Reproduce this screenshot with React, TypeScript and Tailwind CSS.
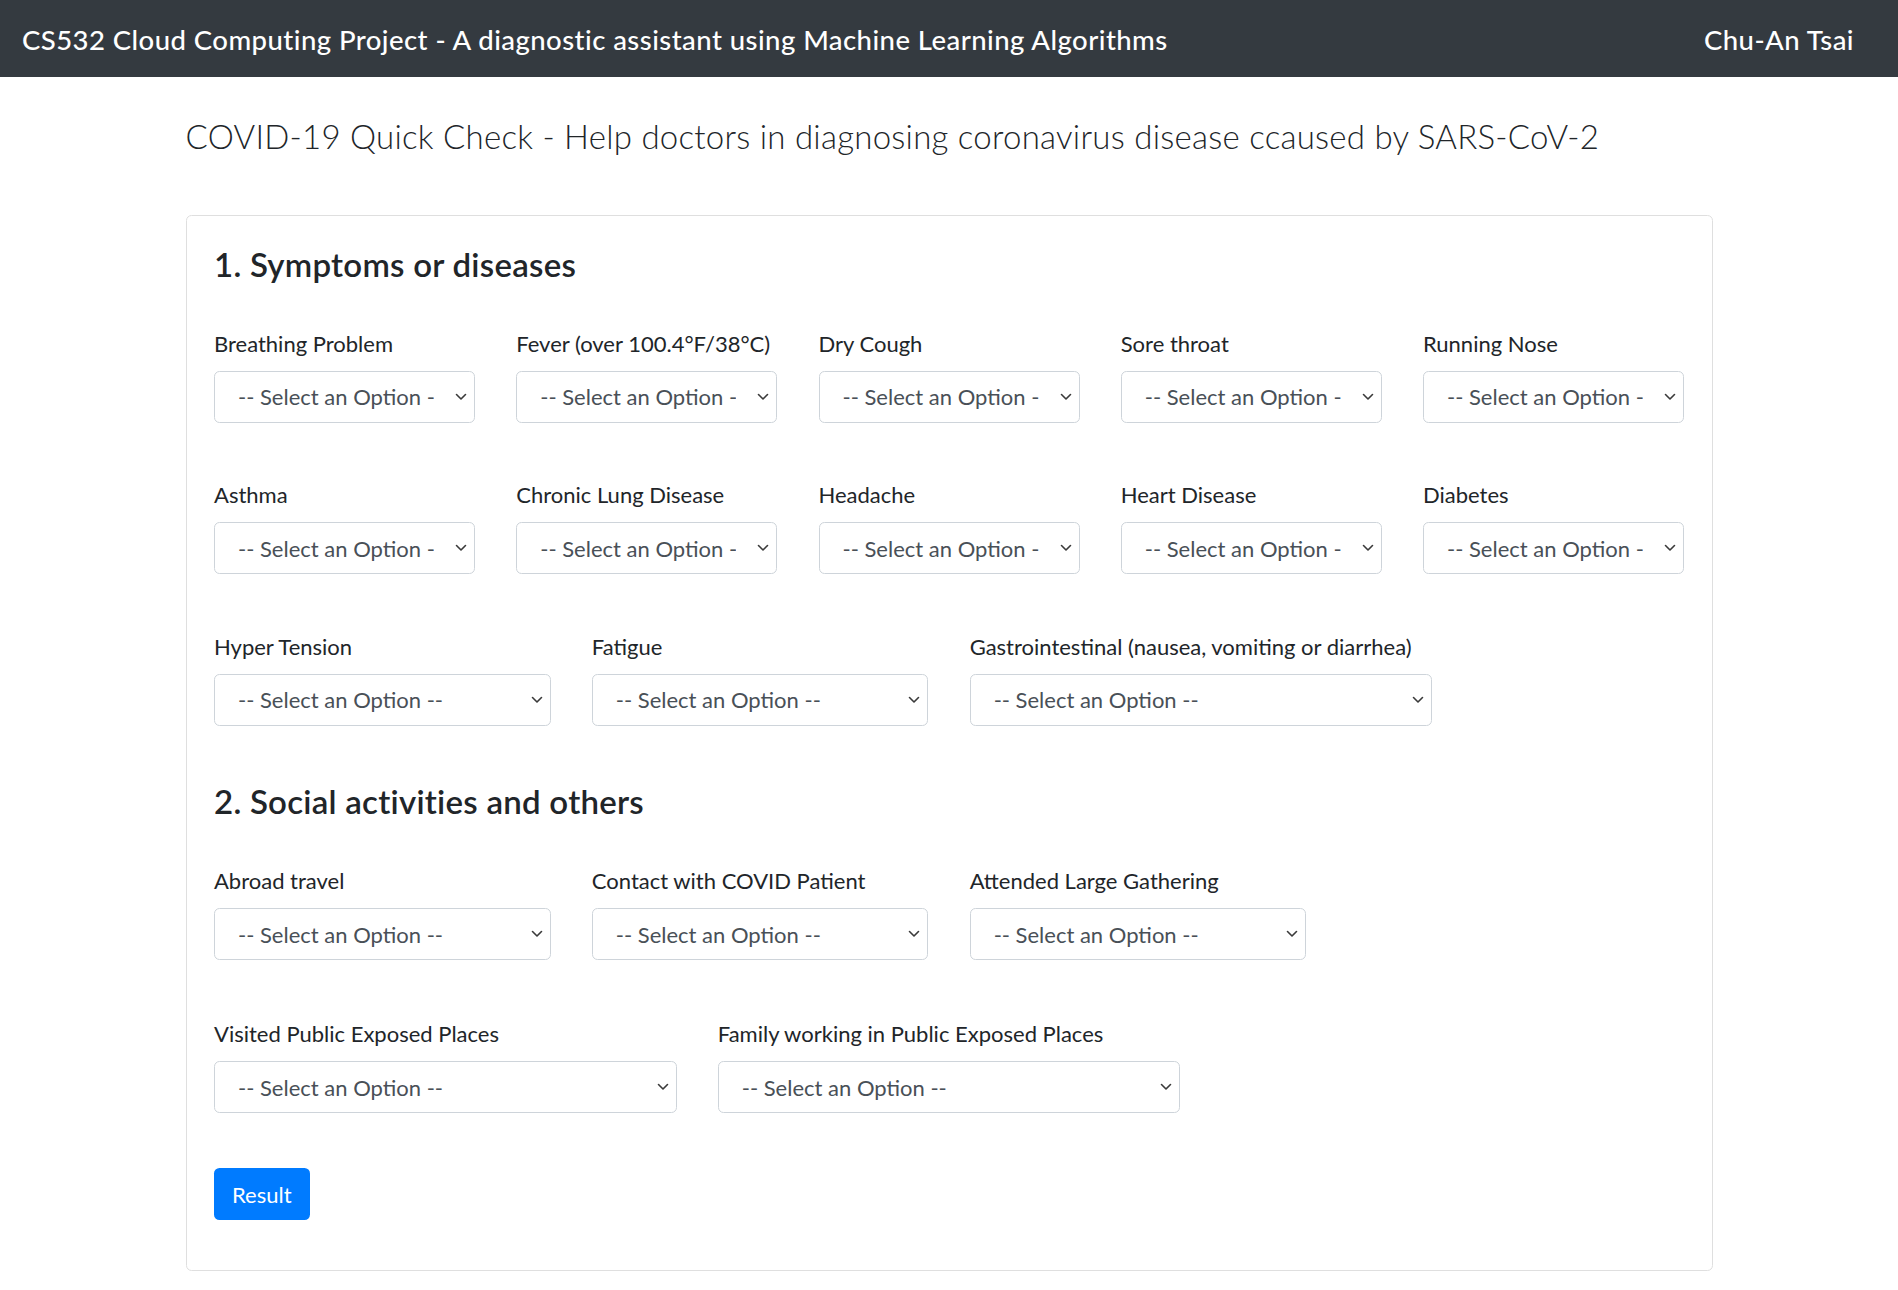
const symptomsTop = [
  "Breathing Problem",
  "Fever (over 100.4°F/38°C)",
  "Dry Cough",
  "Sore throat",
  "Running Nose",
];

const symptomsMid = ["Asthma", "Chronic Lung Disease", "Headache", "Heart Disease", "Diabetes"];

const Chevron = () => (
  <svg
    className="pointer-events-none absolute right-[8px] top-1/2 -translate-y-1/2"
    width="12"
    height="8"
    viewBox="0 0 12 8"
    fill="none"
  >
    <path d="M1.5 1.5L6 6l4.5-4.5" stroke="#3a3a3a" strokeWidth="1.6" strokeLinecap="round" strokeLinejoin="round" />
  </svg>
);

const Field = ({ label, className = "" }: { label: string; className?: string }) => (
  <div className={`flex flex-col ${className}`}>
    <label className="mb-[11px] text-[22px] leading-[33px] text-[#212529]">{label}</label>
    <div className="relative">
      <select
        defaultValue=""
        className="h-[52px] w-full appearance-none rounded-[5.5px] border border-[#ced4da] bg-white pl-[23px] pr-[40px] text-[22px] text-[#495057] outline-none"
      >
        <option value="">-- Select an Option --</option>
        <option value="yes">Yes</option>
        <option value="no">No</option>
      </select>
      <Chevron />
    </div>
  </div>
);

const App = () => {
  return (
    <div className="min-h-screen bg-white font-['Lato','Open_Sans',sans-serif] text-[#212529]">
      <nav className="flex h-[77px] items-center justify-between bg-[#343a40] pl-[22px] pr-[44px] text-[27.5px] font-medium tracking-[0.45px] text-white">
        <span className="pt-[2px]">CS532 Cloud Computing Project - A diagnostic assistant using Machine Learning Algorithms</span>
        <span className="pt-[2px]">Chu-An Tsai</span>
      </nav>

      <main className="mx-auto w-[1527px] pb-10">
        <h1 className="mt-[40px] text-[33px] font-light leading-[1.2] tracking-[0.25px]">
          COVID-19 Quick Check - Help doctors in diagnosing coronavirus disease ccaused by SARS-CoV-2
        </h1>

        <div className="mt-[58px] flex flex-col rounded-[5.5px] border border-[#dfdfdf] p-[27.5px]">
          <h2 className="pt-[2px] text-[33px] font-semibold leading-[1.2] tracking-[0.25px]">1. Symptoms or diseases</h2>

          <div className="mt-[42px] grid grid-cols-5 gap-x-[41.25px]">
            {symptomsTop.map((s) => (
              <Field key={s} label={s} />
            ))}
          </div>

          <div className="mt-[55.5px] grid grid-cols-5 gap-x-[41.25px]">
            {symptomsMid.map((s) => (
              <Field key={s} label={s} />
            ))}
          </div>

          <div className="mt-[55.5px] grid grid-cols-12 gap-x-[41.25px]">
            <Field label="Hyper Tension" className="col-span-3" />
            <Field label="Fatigue" className="col-span-3" />
            <Field label="Gastrointestinal (nausea, vomiting or diarrhea)" className="col-span-4" />
          </div>

          <h2 className="mt-[56px] text-[33px] font-semibold leading-[1.2] tracking-[0.25px]">2. Social activities and others</h2>

          <div className="mt-[43px] grid grid-cols-12 gap-x-[41.25px]">
            <Field label="Abroad travel" className="col-span-3" />
            <Field label="Contact with COVID Patient" className="col-span-3" />
            <Field label="Attended Large Gathering" className="col-span-3" />
          </div>

          <div className="mt-[57px] grid grid-cols-12 gap-x-[41.25px]">
            <Field label="Visited Public Exposed Places" className="col-span-4" />
            <Field label="Family working in Public Exposed Places" className="col-span-4" />
          </div>

          <div className="mt-[55px] mb-[22px]">
            <button className="h-[52px] rounded-[5.5px] bg-[#007bff] px-[18px] text-[22px] text-white">
              Result
            </button>
          </div>
        </div>
      </main>
    </div>
  );
};

export default App;
